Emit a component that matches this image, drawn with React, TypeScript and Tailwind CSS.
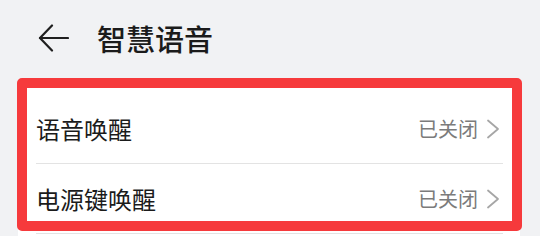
import React from "react";

const font = { fontFamily: '"Noto Sans CJK SC", "Noto Sans", sans-serif' };

function Chevron() {
  return (
    <svg width="14" height="20" viewBox="0 0 14 20" fill="none" className="shrink-0">
      <path d="M2 1.5 L12 10 L2 18.5" stroke="#a6a6a6" strokeWidth="1.8" strokeLinecap="round" strokeLinejoin="round" />
    </svg>
  );
}

function Row({ label, divider }: { label: string; divider: boolean }) {
  return (
    <div className={`flex h-[70px] items-center justify-between ${divider ? "border-b border-[#e3e3e3]" : ""}`}>
      <span className="text-[24px] leading-none text-[#1b1b1b]">{label}</span>
      <div className="flex items-center gap-[8px] pr-[3px]">
        <span className="text-[20px] leading-none text-[#7b7b7b]">已关闭</span>
        <Chevron />
      </div>
    </div>
  );
}

export default function App() {
  return (
    <div className="relative h-[236px] w-[540px] overflow-hidden bg-[#f1f2f4]" style={font}>
      <div className="flex h-[80px] items-center pb-[4px] pl-[38px]">
        <svg width="31" height="28" viewBox="0 0 31 28" fill="none" className="shrink-0">
          <path d="M2 14 H30" stroke="#1f1f1f" strokeWidth="2.2" strokeLinecap="round" />
          <path d="M14 1.5 L2 14 L14 26.5" stroke="#1f1f1f" strokeWidth="2.2" strokeLinecap="round" strokeLinejoin="round" />
        </svg>
        <span className="ml-[28px] text-[29px] font-medium leading-none text-[#1b1b1b]">智慧语音</span>
      </div>
      <div className="ml-[18px] w-[502px] rounded-[14px] bg-white pl-[18px] pr-[17px] pt-[14px]">
        <Row label="语音唤醒" divider />
        <Row label="电源键唤醒" divider />
        <div className="h-[40px]" />
      </div>
      <div className="absolute left-[17px] top-[78px] h-[153px] w-[505px] rounded-[5px] border-[10px] border-[#f63a3c]" />
    </div>
  );
}
